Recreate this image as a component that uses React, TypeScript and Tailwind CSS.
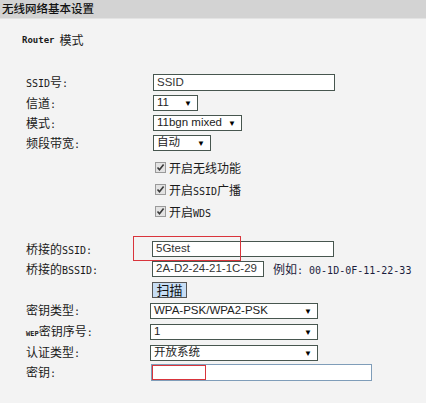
import React from "react";

const mono = "font-['DejaVu_Sans_Mono',monospace]";
const cjk = "font-['Noto_Sans_CJK_SC',sans-serif]";
const sans = "font-['Liberation_Sans','Noto_Sans_CJK_SC',sans-serif]";

function L({ children }: { children: React.ReactNode }) {
  return <span className={`${mono} text-[10px]`}>{children}</span>;
}

function Row({
  h,
  label,
  children,
}: {
  h: string;
  label?: React.ReactNode;
  children?: React.ReactNode;
}) {
  return (
    <div className={`flex items-center ${h}`}>
      <div className={`w-[126px] shrink-0 text-[12px] text-[#1a1a1a] ${cjk} leading-none whitespace-nowrap`}>
        {label}
      </div>
      <div className="flex items-center">{children}</div>
    </div>
  );
}

function Sel({ w, text, cls = "" }: { w: string; text: string; cls?: string }) {
  return (
    <div
      className={`${w} h-[16px] border border-[#47564f] bg-white flex items-center justify-between pl-[3px] pr-[5px] ${cls}`}
    >
      <span className={`${sans} text-[11.5px] text-[#222] leading-none whitespace-nowrap`}>{text}</span>
      <span className="text-[8px] leading-none text-black">▼</span>
    </div>
  );
}

function Check({ children }: { children: React.ReactNode }) {
  return (
    <div className="flex items-center ml-[3px]">
      <span className="w-[11px] h-[11px] border border-[#9a9a9a] bg-[#e3e3e3] flex items-center justify-center mb-[2px]">
        <svg width="9" height="9" viewBox="0 0 9 9">
          <path d="M1.5 4.5 L3.5 6.8 L7.6 1.6" fill="none" stroke="#3a3a3a" strokeWidth="1.6" />
        </svg>
      </span>
      <span className={`ml-[3px] text-[12px] ${cjk} text-[#1a1a1a] leading-none whitespace-nowrap`}>{children}</span>
    </div>
  );
}

export default function App() {
  return (
    <div className="w-[426px] h-[403px] bg-[#f3f3f3] overflow-hidden">
      <div
        className={`h-[19px] bg-[#d3d3d3] border-b border-[#e3e3e3] pl-[2px] flex items-center text-[11.5px] font-medium text-[#111] ${cjk} leading-none`}
      >
        无线网络基本设置
      </div>
      <div className={`mt-[12px] h-[18px] pl-[22px] flex items-center text-[12px] ${cjk} text-[#1a1a1a] leading-none`}>
        <span className={`${mono} text-[9px] font-bold mr-[5px]`}>Router</span>模式
      </div>

      <div className="mt-[23px] pl-[26px] flex flex-col">
        <Row h="h-[21px]" label={<><L>SSID</L>号<L>:</L></>}>
          <div className={`ml-[1px] w-[182px] h-[17px] border border-[#47564f] bg-white flex items-center pl-[3px] ${sans} text-[11.5px] text-[#333] leading-none`}>
            SSID
          </div>
        </Row>
        <Row h="h-[20px]" label={<>信道<L>:</L></>}>
          <Sel w="w-[45px] ml-[1px]" text="11" />
        </Row>
        <Row h="h-[20px]" label={<>模式<L>:</L></>}>
          <Sel w="w-[89px] ml-[1px]" text="11bgn mixed" />
        </Row>
        <Row h="h-[20px]" label={<>频段带宽<L>:</L></>}>
          <Sel w="w-[58px] ml-[1px]" text="自动" />
        </Row>

        <div className="mt-[4px]">
          <Row h="h-[22px]">
            <Check>开启无线功能</Check>
          </Row>
          <Row h="h-[22px]">
            <Check>
              开启<L>SSID</L>广播
            </Check>
          </Row>
          <Row h="h-[22px]">
            <Check>
              开启<L>WDS</L>
            </Check>
          </Row>
        </div>

        <div className="mt-[16px] flex flex-col">
          <Row h="h-[20px]" label={<>桥接的<L>SSID:</L></>}>
            <div className={`relative w-[182px] h-[16px] border border-[#47564f] bg-white flex items-center pl-[3px] ${sans} text-[11.5px] text-[#333] leading-none`}>
              5Gtest
              <div className="absolute left-[-20px] top-[-6px] w-[108px] h-[25px] border border-[#d9343b]" />
            </div>
          </Row>
          <Row h="h-[20px]" label={<>桥接的<L>BSSID:</L></>}>
            <div className={`w-[112px] h-[16px] border border-[#47564f] bg-white flex items-center pl-[3px] ${sans} text-[11.5px] text-[#333] leading-none`}>
              2A-D2-24-21-1C-29
            </div>
            <span className={`ml-[9px] text-[12px] ${cjk} text-[#1c1c3c] leading-none whitespace-nowrap`}>
              例如<span className={`${mono} text-[10px]`}>: 00-1D-0F-11-22-33</span>
            </span>
          </Row>
          <Row h="h-[21px]">
            <div className={`w-[35px] h-[16px] border border-[#555] bg-[#c7ddf4] flex items-center justify-center text-[13px] ${cjk} text-[#111] leading-none`}>
              扫描
            </div>
          </Row>
          <Row h="h-[21px]" label={<>密钥类型<L>:</L></>}>
            <Sel w="w-[168px] -ml-[2px]" text="WPA-PSK/WPA2-PSK" />
          </Row>
          <Row
            h="h-[21px]"
            label={
              <>
                <span className={`${mono} text-[7px] font-bold`}>WEP</span>密钥序号<L>:</L>
              </>
            }
          >
            <Sel w="w-[168px] -ml-[2px]" text="1" />
          </Row>
          <Row h="h-[21px]" label={<>认证类型<L>:</L></>}>
            <Sel w="w-[168px] -ml-[2px]" text="开放系统" />
          </Row>
          <Row h="h-[19px]" label={<>密钥<L>:</L></>}>
            <div className="relative -ml-[1px] w-[221px] h-[17px] border border-[#7f9db9] bg-white">
              <div className="absolute left-0 top-0 w-[54px] h-full border border-[#d9343b]" />
            </div>
          </Row>
        </div>
      </div>
    </div>
  );
}
